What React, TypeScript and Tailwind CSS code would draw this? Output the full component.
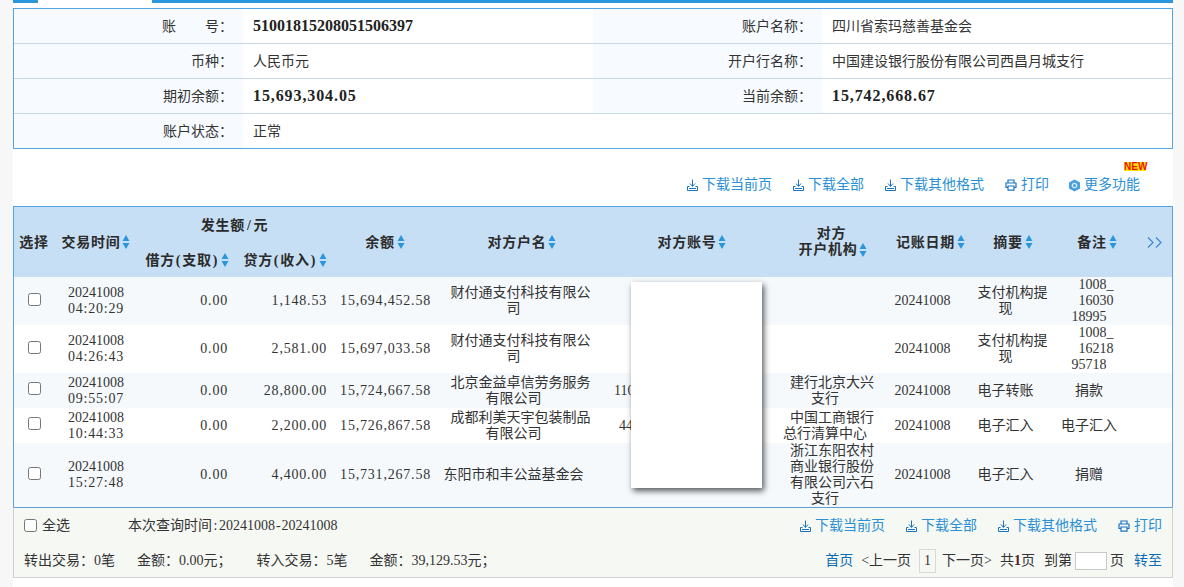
const COLS = 'grid grid-cols-[40px_84px_94px_99px_104px_157px_178px_110px_85px_81px_86px_40px]';

function Sort() {
  return (
    <svg width="8" height="14" viewBox="0 0 8 14" className="ml-[2px] shrink-0">
      <path d="M4 0 L7.5 6 L.5 6 Z M.5 8 L7.5 8 L4 14 Z" fill="#2a96dc" />
    </svg>
  );
}

function Download() {
  return (
    <svg width="11" height="12" viewBox="0 0 11 12" fill="none" stroke="#1b74bd" strokeWidth="1" className="shrink-0">
      <path d="M5.5 0.5 V7 M3 4.5 L5.5 7.5 L8 4.5" />
      <path d="M0.5 7.5 V11.5 H10.5 V7.5 H8.5 M2.5 7.5 H0.5 M2 9.5 H9" />
    </svg>
  );
}

function Printer() {
  return (
    <svg width="12" height="12" viewBox="0 0 12 12" fill="none" stroke="#1b74bd" strokeWidth="1.2" className="shrink-0">
      <path d="M3 4 V1 H9 V4" />
      <path d="M3 8.5 H1 V4 H11 V8.5 H9" />
      <path d="M3 7 H9 V11.2 H3 Z" />
    </svg>
  );
}

function Hex() {
  return (
    <svg width="11" height="13" viewBox="0 0 11 13" className="shrink-0">
      <path d="M5.5 .5 L11 3.5 V9.5 L5.5 12.5 L0 9.5 V3.5 Z" fill="#4a9fdf" />
      <circle cx="5.5" cy="6.5" r="2.8" fill="#d5eaf9" />
      <circle cx="5.5" cy="6.5" r="1.5" fill="#4a9fdf" />
    </svg>
  );
}

function Link({ icon, text, className = '' }: { icon: React.ReactNode; text: string; className?: string }) {
  return (
    <span className={`relative flex items-center h-[16px] gap-[4px] text-[#2a8fd6] ${className}`}>
      {icon}
      <span>{text}</span>
    </span>
  );
}

function Lines({ lines }: { lines: string[] }) {
  return (
    <div className="flex flex-col items-center leading-[16px] whitespace-nowrap">
      {lines.map((l, i) => (
        <div key={i} className={l.startsWith('+') ? 'pl-[14px]' : ''}>
          {l.replace('+', '')}
        </div>
      ))}
    </div>
  );
}

function InfoRow({ l1, v1, l2, v2, c1 = '', c2 = '', last }: { l1: React.ReactNode; v1: string; l2?: string; v2?: string; c1?: string; c2?: string; last?: boolean }) {
  return (
    <div className={`flex ${last ? 'h-[34px]' : 'h-[35px] border-b border-[#c5d9ea]'}`}>
      <div className="w-[229px] bg-[#f7fbff] flex items-center justify-end pr-[10px]">{l1}</div>
      <div className={`w-[350px] pl-[10px] flex items-center ${c1}`}>{v1}</div>
      {l2 && <div className="w-[229px] bg-[#f7fbff] flex items-center justify-end pr-[10px]">{l2}</div>}
      {l2 && <div className={`pl-[10px] flex items-center ${c2}`}>{v2}</div>}
    </div>
  );
}

const rows = [
  { h: 'h-[48px]', bg: 'bg-[#f5f9fc]', d: '20241008', t: '04:20:29', c: '1,148.53', b: '15,694,452.58', n: ['+财付通支付科技有限公', '司'], acc: '', acp: '', o: [] as string[], s: ['+支付机构提', '现'], m: ['+1008_', '+16030', '18995'] },
  { h: 'h-[48px]', bg: 'bg-white', d: '20241008', t: '04:26:43', c: '2,581.00', b: '15,697,033.58', n: ['+财付通支付科技有限公', '司'], acc: '', acp: '', o: [] as string[], s: ['+支付机构提', '现'], m: ['+1008_', '+16218', '95718'] },
  { h: 'h-[35px]', bg: 'bg-[#f5f9fc]', d: '20241008', t: '09:55:07', c: '28,800.00', b: '15,724,667.58', n: ['+北京金益卓信劳务服务', '有限公司'], acc: '110', acp: 'pl-[22px]', o: ['+建行北京大兴', '支行'], s: ['电子转账'], m: ['捐款'] },
  { h: 'h-[35px]', bg: 'bg-white', d: '20241008', t: '10:44:33', c: '2,200.00', b: '15,726,867.58', n: ['+成都利美天宇包装制品', '有限公司'], acc: '44', acp: 'pl-[27px]', o: ['+中国工商银行', '总行清算中心'], s: ['电子汇入'], m: ['电子汇入'] },
  { h: 'h-[64px]', bg: 'bg-[#f5f9fc]', d: '20241008', t: '15:27:48', c: '4,400.00', b: '15,731,267.58', n: ['东阳市和丰公益基金会'], acc: '', acp: '', o: ['+浙江东阳农村', '+商业银行股份', '+有限公司六石', '支行'], s: ['电子汇入'], m: ['捐赠'] },
];

export default function App() {
  return (
    <div className="h-[587px] w-[1184px] overflow-hidden bg-[#f7f7f7] pl-[13px] text-[14px] text-[#333] font-['Liberation_Serif','Noto_Sans_CJK_SC',serif]">
      <div className="w-[1160px] h-[587px] bg-white">
        {/* tab strip */}
        <div className="flex h-[3px] mb-[5px]">
          <div className="w-[25px] bg-[#2a96dc]" />
          <div className="w-[114px]" />
          <div className="flex-1 bg-[#2a96dc]" />
        </div>

        {/* account info */}
        <div className="border border-[#55a5e6]">
          <InfoRow
            l1={
              <span className="flex">
                <span className="mr-[29px]">账</span>号：
              </span>
            }
            v1="51001815208051506397"
            l2="账户名称："
            v2="四川省索玛慈善基金会"
            c1="font-bold text-[16px] text-[#222]"
          />
          <InfoRow l1="币种：" v1="人民币元" l2="开户行名称：" v2="中国建设银行股份有限公司西昌月城支行" />
          <InfoRow
            l1="期初余额："
            v1="15,693,304.05"
            l2="当前余额："
            v2="15,742,668.67"
            c1="font-bold text-[16px] tracking-[0.9px] text-[#222]"
            c2="font-bold text-[16px] tracking-[0.9px] text-[#222]"
          />
          <InfoRow l1="账户状态：" v1="正常" last />
        </div>

        {/* action links */}
        <div className="h-[57px] pt-[28px] pr-[33px] flex justify-end items-start gap-[21px] leading-[16px]">
          <Link icon={<Download />} text="下载当前页" />
          <Link icon={<Download />} text="下载全部" />
          <Link icon={<Download />} text="下载其他格式" />
          <Link icon={<Printer />} text="打印" />
          <div className="relative -ml-[1px]">
            <Link icon={<Hex />} text="更多功能" />
            <span className="absolute -right-[6px] -top-[15px] w-[22px] h-[9px] bg-[#ffe600] text-[#f01010] text-[10px] leading-[9px] font-bold text-center font-['Liberation_Sans',sans-serif]">
              NEW
            </span>
          </div>
        </div>

        {/* table */}
        <div className="relative border-x border-t border-[#55a5e6]">
          <div className={`${COLS} h-[70px] bg-[#c6dff5] font-semibold tracking-[0.7px] text-[#2b2b2b]`}>
            <div className="flex items-center justify-center">选择</div>
            <div className="flex items-center justify-center">交易时间<Sort /></div>
            <div className="col-span-2 flex flex-col">
              <div className="h-[36px] flex items-center justify-center">发生额<span className="mx-[2px]">/</span>元</div>
              <div className="h-[34px] flex">
                <div className="w-[94px] flex items-center justify-end pr-[3px]">
                  借方<span className="mx-[1px]">(</span>支取<span className="mx-[1px]">)</span><Sort />
                </div>
                <div className="w-[99px] flex items-center justify-end pr-[4px]">
                  贷方<span className="mx-[1px]">(</span>收入<span className="mx-[1px]">)</span><Sort />
                </div>
              </div>
            </div>
            <div className="flex items-center justify-center pl-[4px]">余额<Sort /></div>
            <div className="flex items-center justify-center pl-[17px]">对方户名<Sort /></div>
            <div className="flex items-center justify-center pl-[22px]">对方账号<Sort /></div>
            <div className="flex flex-col items-center justify-center pl-[16px] leading-[16px]">
              <div className="pr-[3px]">对方</div>
              <div className="flex items-center">开户机构<Sort /></div>
            </div>
            <div className="flex items-center justify-center pl-[16px]">记账日期<Sort /></div>
            <div className="flex items-center justify-center pl-[15px]">摘要<Sort /></div>
            <div className="flex items-center justify-center pl-[16px]">备注<Sort /></div>
            <div className="flex items-center pl-[15px]">
              <svg width="16" height="11" viewBox="0 0 16 11" fill="none" stroke="#3f86d4" strokeWidth="1.2">
                <path d="M1 .5 L6 5.5 L1 10.5 M9 .5 L14 5.5 L9 10.5" />
              </svg>
            </div>
          </div>

          {rows.map((r, i) => (
            <div key={i} className={`${COLS} ${r.h} ${r.bg} items-center leading-[16px]`}>
              <div className="flex justify-center mb-[4px]">
                <input type="checkbox" className="m-0" />
              </div>
              <div className="text-center tracking-[0.8px]">
                <div className="tracking-normal">{r.d}</div>
                <div>{r.t}</div>
              </div>
              <div className="text-right pr-[4px] tracking-[0.8px]">0.00</div>
              <div className="text-right pr-[4px] tracking-[0.8px]">{r.c}</div>
              <div className="text-right pr-[4px] tracking-[0.8px]">{r.b}</div>
              <Lines lines={r.n} />
              <div className={r.acp}>{r.acc}</div>
              <Lines lines={r.o} />
              <div className="text-center">{r.d}</div>
              <Lines lines={r.s} />
              <Lines lines={r.m} />
              <div />
            </div>
          ))}

          <div className="absolute left-[617px] top-[75px] w-[131px] h-[206px] bg-white shadow-[2px_3px_6px_rgba(0,0,0,0.65)]" />
        </div>

        {/* footer */}
        <div className="h-[71px] bg-[#f6f8f4] border-t border-t-[#5b9fdc] border-x border-x-[#cfcfcf] border-b border-b-[#cfcfcf]">
          <div className="h-[35px] flex items-center justify-between pl-[10px] pr-[10px]">
            <div className="flex items-center">
              <input type="checkbox" className="m-0" />
              <span className="ml-[5px]">全选</span>
              <span className="ml-[58px]">
                本次查询时间<span className="mx-[1.5px]">:</span>20241008<span className="mx-[1px]">-</span>20241008
              </span>
            </div>
            <div className="flex gap-[21px]">
              <Link icon={<Download />} text="下载当前页" />
              <Link icon={<Download />} text="下载全部" />
              <Link icon={<Download />} text="下载其他格式" />
              <Link icon={<Printer />} text="打印" />
            </div>
          </div>
          <div className="h-[35px] flex items-center justify-between pl-[10px] pr-[10px]">
            <div className="flex items-center">
              <span>转出交易：0笔</span>
              <span className="ml-[22px]">金额：0.00元；</span>
              <span className="ml-[25px]">转入交易：5笔</span>
              <span className="ml-[22px]">金额：39,129.53元；</span>
            </div>
            <div className="flex items-center">
              <span className="text-[#0b6bb5]">首页</span>
              <span className="ml-[8px]">{'<'}上一页</span>
              <span className="ml-[8px] w-[17px] h-[24px] border border-[#d8d8d8] flex items-center justify-center">1</span>
              <span className="ml-[6px]">下一页{'>'}</span>
              <span className="ml-[8px]">共<b className="text-[#5a1a2a]">1</b>页</span>
              <span className="ml-[9px]">到第</span>
              <span className="ml-[3px] w-[32px] h-[18px] bg-white border border-[#c8c8c8]" />
              <span className="ml-[3px]">页</span>
              <span className="ml-[10px] text-[#0b6bb5]">转至</span>
            </div>
          </div>
        </div>
      </div>
    </div>
  );
}
